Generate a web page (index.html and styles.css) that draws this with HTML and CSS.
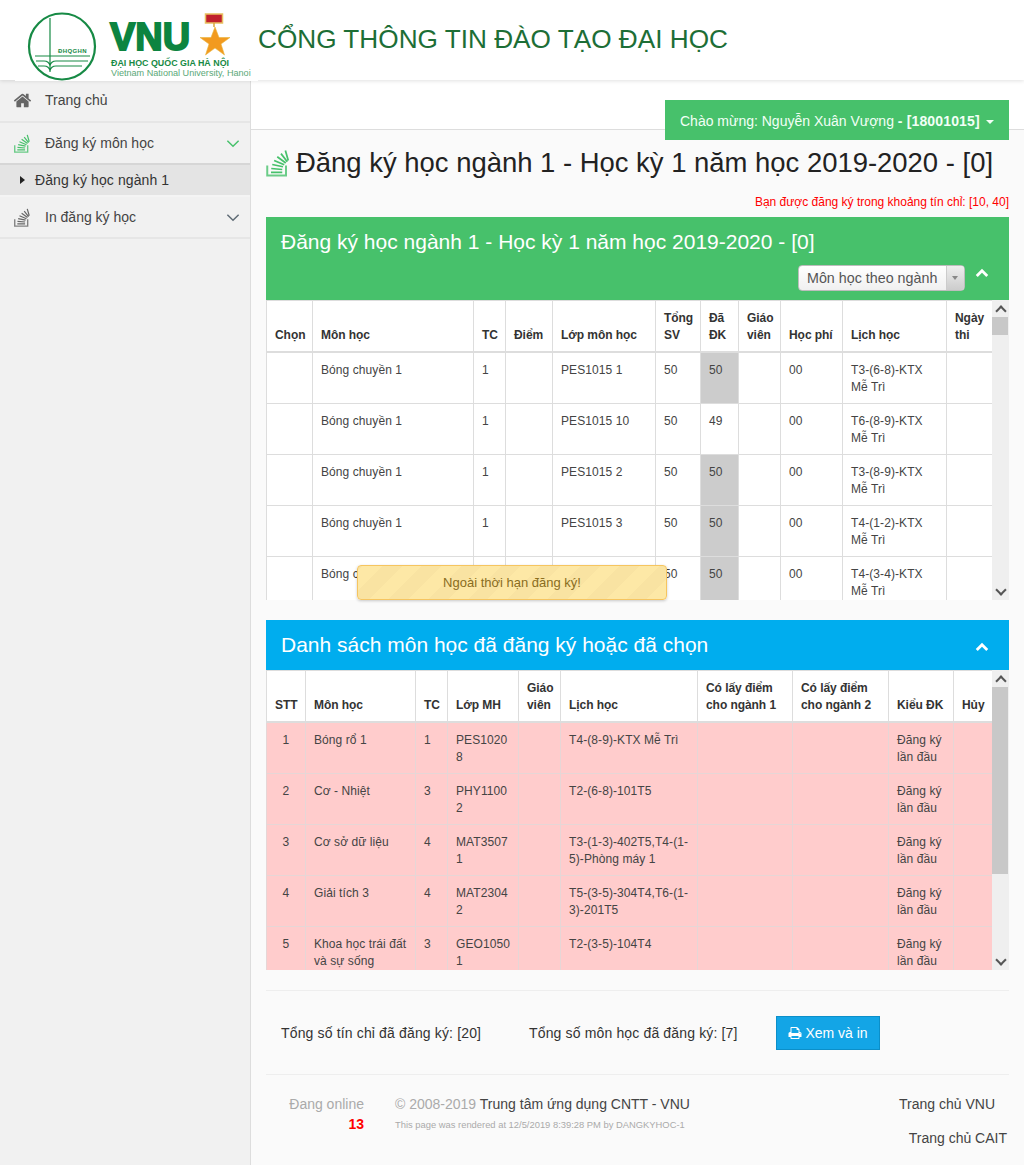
FILE: index.html
```html
<!DOCTYPE html>
<html lang="vi">
<head>
<meta charset="utf-8">
<title>Cổng thông tin đào tạo đại học</title>
<link rel="stylesheet" href="styles.css">
</head>
<body>
<svg class="defs" width="0" height="0">
  <symbol id="so" viewBox="0 0 20 22">
    <path d="M1 13v8h15v-8" fill="none" stroke="currentColor" stroke-width="1.600" opacity=".8"/>
    <path d="M4 18.500h9M4.200 15.400l8.800.8M5 12.200l8.600 1.800M6.500 9l8.100 3.400M9 6l6.800 5M12 3.500l5 6.500M15.500 1l2.300 8" fill="none" stroke="currentColor" stroke-width="1.400"/>
  </symbol>
</svg>
<header class="topbar">
  <div class="logo">
    <svg width="243" height="81" viewBox="0 0 243 81">
      <circle cx="47" cy="46.500" r="33" fill="#fff" stroke="#178a45" stroke-width="2.200"/>
      <path d="M35 18v54M20 56h55M21 61h8q5 0 6 5q1-5 6-5h32M23 66h6q5 0 6 5q1-5 6-5h26" fill="none" stroke="#178a45" stroke-width="1.200"/>
      <text x="43" y="53" class="lg-dh">ĐHQGHN</text>
      <text x="95" y="50" class="lg-vnu">VNU</text>
      <text x="96" y="66" class="lg-vi">ĐẠI HỌC QUỐC GIA HÀ NỘI</text>
      <text x="96" y="76" class="lg-en">Vietnam National University, Hanoi</text>
      <rect x="190.500" y="14" width="17" height="9" fill="#c0202c" stroke="#e8c060" stroke-width="1.500"/>
      <path d="M199 23v4" stroke="#d9a53a" stroke-width="1.500"/>
      <path d="M200 27l4 10.500h11l-9 6.500 3.500 11-9.500-7-9.500 7 3.500-11-9-6.500h11z" fill="#f29a1f" stroke="#e9b53a" stroke-width=".6"/>
    </svg>
  </div>
  <h1 class="site-title">CỔNG THÔNG TIN ĐÀO TẠO ĐẠI HỌC</h1>
</header>
<div class="shell">
  <nav class="sidebar">
    <a class="nav-item first">
      <svg class="nav-icon home" viewBox="0 0 1792 1792"><path fill="currentColor" d="M1472 992v480q0 26-19 45t-45 19h-384v-384h-256v384h-384q-26 0-45-19t-19-45v-480q0-1 .5-3t.5-3l575-474 575 474q1 2 1 6zm223-69l-62 74q-8 9-21 11h-3q-13 0-21-7l-692-577-692 577q-12 8-24 7-13-2-21-11l-62-74q-8-10-7-23.5t11-21.5l719-599q32-26 76-26t76 26l244 204v-195q0-14 9-23t23-9h192q14 0 23 9t9 23v408l219 182q10 8 11 21.500t-7 23.500z"/></svg>
      <span>Trang chủ</span>
    </a>
    <a class="nav-item active">
      <svg class="nav-icon so green"><use href="#so"/></svg>
      <span>Đăng ký môn học</span>
      <svg class="chev green" viewBox="0 0 12 8"><path d="M1 1.500l5 5 5-5" fill="none" stroke="currentColor" stroke-width="1.300"/></svg>
    </a>
    <a class="nav-sub"><i class="caret-r"></i>Đăng ký học ngành 1</a>
    <a class="nav-item second">
      <svg class="nav-icon so"><use href="#so"/></svg>
      <span>In đăng ký học</span>
      <svg class="chev" viewBox="0 0 12 8"><path d="M1 1.500l5 5 5-5" fill="none" stroke="currentColor" stroke-width="1.300"/></svg>
    </a>
  </nav>
  <main class="main">
    <div class="userbar">
      <div class="user-btn">Chào mừng: Nguyễn Xuân Vượng <b>- [18001015]</b><i class="caret-d"></i></div>
    </div>
    <div class="content">
      <h2 class="page-title"><svg class="title-icon green"><use href="#so"/></svg>Đăng ký học ngành 1 - Học kỳ 1 năm học 2019-2020 - [0]</h2>
      <p class="credit-note">Bạn được đăng ký trong khoảng tín chỉ: [10, 40]</p>

      <section class="panel">
        <div class="panel-head green-head tall">
          <div class="panel-title">Đăng ký học ngành 1 - Học kỳ 1 năm học 2019-2020 - [0]</div>
          <div class="panel-tools">
            <div class="select"><span>Môn học theo ngành</span><i class="select-arrow"></i></div>
            <svg class="collapse" viewBox="0 0 12 8"><path d="M1.500 6.500L6 2l4.500 4.500" fill="none" stroke="#fff" stroke-width="2.400"/></svg>
          </div>
        </div>
        <div class="scroller h300">
          <div class="table-clip">
            <table class="grid">
              <colgroup><col class="c46"><col class="c161"><col class="c32"><col class="c47"><col class="c103"><col class="c45"><col class="c38"><col class="c42"><col class="c62"><col class="c104"><col class="c46"></colgroup>
              <thead><tr><th>Chọn</th><th>Môn học</th><th>TC</th><th>Điểm</th><th>Lớp môn học</th><th>Tổng SV</th><th>Đã ĐK</th><th>Giáo viên</th><th>Học phí</th><th>Lịch học</th><th>Ngày thi</th></tr></thead>
              <tbody>
                <tr><td></td><td>Bóng chuyền 1</td><td>1</td><td></td><td>PES1015 1</td><td>50</td><td class="full">50</td><td></td><td>00</td><td>T3-(6-8)-KTX Mễ Trì</td><td></td></tr>
                <tr><td></td><td>Bóng chuyền 1</td><td>1</td><td></td><td>PES1015 10</td><td>50</td><td>49</td><td></td><td>00</td><td>T6-(8-9)-KTX Mễ Trì</td><td></td></tr>
                <tr><td></td><td>Bóng chuyền 1</td><td>1</td><td></td><td>PES1015 2</td><td>50</td><td class="full">50</td><td></td><td>00</td><td>T3-(8-9)-KTX Mễ Trì</td><td></td></tr>
                <tr><td></td><td>Bóng chuyền 1</td><td>1</td><td></td><td>PES1015 3</td><td>50</td><td class="full">50</td><td></td><td>00</td><td>T4-(1-2)-KTX Mễ Trì</td><td></td></tr>
                <tr><td></td><td>Bóng chuyền 1</td><td>1</td><td></td><td>PES1015 4</td><td>50</td><td class="full">50</td><td></td><td>00</td><td>T4-(3-4)-KTX Mễ Trì</td><td></td></tr>
              </tbody>
            </table>
          </div>
          <div class="fake-scroll"><i class="arrow up"></i><div class="track"><div class="thumb t1"></div></div><i class="arrow down"></i></div>
        </div>
      </section>

      <section class="panel second-panel">
        <div class="panel-head blue-head">
          <div class="panel-title">Danh sách môn học đã đăng ký hoặc đã chọn</div>
          <svg class="collapse" viewBox="0 0 12 8"><path d="M1.500 6.500L6 2l4.500 4.500" fill="none" stroke="#fff" stroke-width="2.400"/></svg>
        </div>
        <div class="scroller h300">
          <div class="table-clip">
            <table class="grid pink">
              <colgroup><col class="c39"><col class="c110"><col class="c32"><col class="c71"><col class="c42"><col class="c137"><col class="c95"><col class="c96"><col class="c65"><col class="c39"></colgroup>
              <thead><tr><th class="ctr">STT</th><th>Môn học</th><th>TC</th><th>Lớp MH</th><th>Giáo viên</th><th>Lịch học</th><th>Có lấy điểm cho ngành 1</th><th>Có lấy điểm cho ngành 2</th><th>Kiểu ĐK</th><th class="ctr">Hủy</th></tr></thead>
              <tbody>
                <tr><td class="ctr">1</td><td>Bóng rổ 1</td><td>1</td><td>PES1020 8</td><td></td><td>T4-(8-9)-KTX Mễ Trì</td><td></td><td></td><td>Đăng ký lần đầu</td><td></td></tr>
                <tr><td class="ctr">2</td><td>Cơ - Nhiệt</td><td>3</td><td>PHY1100 2</td><td></td><td>T2-(6-8)-101T5</td><td></td><td></td><td>Đăng ký lần đầu</td><td></td></tr>
                <tr><td class="ctr">3</td><td>Cơ sở dữ liệu</td><td>4</td><td>MAT3507 1</td><td></td><td>T3-(1-3)-402T5,T4-(1-5)-Phòng máy 1</td><td></td><td></td><td>Đăng ký lần đầu</td><td></td></tr>
                <tr><td class="ctr">4</td><td>Giải tích 3</td><td>4</td><td>MAT2304 2</td><td></td><td>T5-(3-5)-304T4,T6-(1-3)-201T5</td><td></td><td></td><td>Đăng ký lần đầu</td><td></td></tr>
                <tr><td class="ctr">5</td><td>Khoa học trái đất và sự sống</td><td>3</td><td>GEO1050 1</td><td></td><td>T2-(3-5)-104T4</td><td></td><td></td><td>Đăng ký lần đầu</td><td></td></tr>
              </tbody>
            </table>
          </div>
          <div class="fake-scroll"><i class="arrow up"></i><div class="track"><div class="thumb t2"></div></div><i class="arrow down"></i></div>
        </div>
      </section>

      <div class="summary">
        <span class="sum1">Tổng số tín chỉ đã đăng ký: [20]</span>
        <span class="sum2">Tổng số môn học đã đăng ký: [7]</span>
        <a class="print-btn"><svg class="print-icon" viewBox="0 0 1792 1792"><path fill="currentColor" d="M448 1536h896v-256h-896v256zm0-640h896v-384h-160q-40 0-68-28t-28-68v-160h-640v640zm1152 64q0-26-19-45t-45-19-45 19-19 45 19 45 45 19 45-19 19-45zm128 0v416q0 13-9.500 22.500t-22.500 9.500h-224v160q0 40-28 68t-68 28h-960q-40 0-68-28t-28-68v-160h-224q-13 0-22.500-9.500t-9.500-22.500v-416q0-79 56.500-135.500t135.500-56.500h64v-544q0-40 28-68t68-28h672q40 0 88 20t76 48l152 152q28 28 48 76t20 88v256h64q79 0 135.500 56.500t56.500 135.500z"/></svg> Xem và in</a>
      </div>

      <footer class="footer">
        <div class="online"><div>Đang online</div><b>13</b></div>
        <div class="copy">
          <div>© 2008-2019 <a>Trung tâm ứng dụng CNTT - VNU</a></div>
          <small>This page was rendered at 12/5/2019 8:39:28 PM by DANGKYHOC-1</small>
        </div>
        <div class="links"><a class="l1">Trang chủ VNU</a><a class="l2">Trang chủ CAIT</a></div>
      </footer>
    </div>
    <div class="toast">Ngoài thời hạn đăng ký!</div>
  </main>
</div>
</body>
</html>
```
FILE: styles.css
```css
* { box-sizing: border-box; }
html, body { margin: 0; padding: 0; height: 1165px; overflow: hidden; }
body { font-family: "Liberation Sans", Arial, sans-serif; font-size: 14px; color: #333; background: #fafafa; }
.defs { position: absolute; }
a { color: inherit; text-decoration: none; }
.green { color: #47c16b; }

.topbar { height: 80px; background: #fff; display: flex; box-shadow: 0 1px 4px rgba(0,0,0,.12); position: relative; z-index: 3; }
.logo { width: 243px; height: 81px; margin-left: 15px; background: #fff; }
.logo svg { display: block; }
.lg-dh { font: bold 6px "Liberation Sans", sans-serif; fill: #178a45; letter-spacing: .4px; }
.lg-vnu { font: 900 38px "Liberation Sans", sans-serif; fill: #0c8440; stroke: #0c8440; stroke-width: 1.800px; }
.lg-vi { font: bold 8.900px "Liberation Sans", sans-serif; fill: #178a45; }
.lg-en { font: 9.100px "Liberation Sans", sans-serif; fill: #5aa877; }
.site-title { margin: 0; font-size: 26.200px; font-weight: 400; line-height: 78px; color: #1d6e36; }

.shell { display: flex; height: 1085px; }
.sidebar { width: 251px; flex: none; background: #f1f1f1; border-right: 1px solid #ddd; padding-top: 1px; }
.nav-item { display: flex; align-items: center; height: 42px; border-bottom: 2px solid #e6e6e6; padding-left: 13px; color: #444; }
.nav-item span { margin-left: 13px; flex: 1; }
.nav-item.first { padding-bottom: 2px; }
.nav-item.active { border-bottom: 2px solid #d6d6d6; }
.nav-icon { width: 19px; height: 19px; color: #666; flex: none; }
.nav-icon.green { color: #47c16b; }
.chev { width: 14px; height: 9px; margin-right: 10px; color: #5f6b75; }
.chev.green { color: #47c16b; }
.nav-sub { display: flex; align-items: center; height: 32px; background: #e4e4e4; border-bottom: 2px solid #f4f4f4; padding-left: 20px; color: #333; letter-spacing: .1px; }
.caret-r { width: 0; height: 0; border-left: 5px solid #222; border-top: 4px solid transparent; border-bottom: 4px solid transparent; margin-right: 10px; }

.main { flex: 1; position: relative; min-width: 0; }
.userbar { height: 50px; background: #fff; border-bottom: 1px solid #ddd; display: flex; justify-content: flex-end; padding-right: 15px; }
.user-btn { height: 40px; margin-top: 20px; width: 344px; background: #47c16b; color: #f2fff6; line-height: 42px; padding-left: 15px; white-space: nowrap; position: relative; z-index: 1; }
.user-btn b { letter-spacing: .15px; }
.caret-d { display: inline-block; margin-left: 6px; vertical-align: middle; border-top: 4px solid #f2fff6; border-left: 4px solid transparent; border-right: 4px solid transparent; }

.content { padding: 0 15px; }
.page-title { display: flex; align-items: center; margin: 0; height: 65px; font-size: 27.450px; font-weight: 400; color: #222; white-space: nowrap; }
.title-icon { width: 25px; height: 28px; margin-right: 5px; flex: none; }
.credit-note { margin: 0; height: 22px; font-size: 12px; line-height: 14px; color: #f00; text-align: right; }

.panel { background: #fff; }
.second-panel { margin-top: 20px; }
.panel-head { display: flex; align-items: center; justify-content: space-between; color: #fff; padding: 0 20px 0 15px; }
.panel-title { font-size: 21px; white-space: nowrap; }
.green-head { background: #47c16b; }
.blue-head { background: #00adee; height: 50px; }
.blue-head .collapse { margin-top: 4px; }
.tall { display: block; height: 83px; padding-top: 13px; }
.panel-tools { display: flex; justify-content: flex-end; align-items: flex-start; margin-top: 11px; }
.collapse { width: 14px; height: 10px; flex: none; }
.panel-tools .collapse { margin: 3px 0 0 10px; }
.select { display: flex; align-items: center; width: 167px; height: 26px; border: 1px solid #bdbdbd; border-radius: 4px; background: linear-gradient(#fff, #f0f0f0); color: #555; padding-left: 8px; line-height: 24px; white-space: nowrap; font-size: 14.300px; position: relative; }
.select span { flex: 1; }
.select-arrow { position: relative; width: 18px; height: 24px; background: linear-gradient(#eee, #ccc); border-left: 1px solid #ccc; border-radius: 0 3px 3px 0; }
.select-arrow::after { content: ""; position: absolute; left: 5px; top: 10px; border-top: 4px solid #888; border-left: 3px solid transparent; border-right: 3px solid transparent; }

.scroller { display: flex; background: #fff; overflow: hidden; }
.h300 { height: 300px; }
.table-clip { flex: 1; overflow: hidden; min-width: 0; }
.grid { width: 726px; table-layout: fixed; border-collapse: collapse; font-size: 12px; line-height: 17px; color: #444; background: #fff; }
.grid th, .grid td { border: 1px solid #ddd; padding: 8px; text-align: left; vertical-align: top; }
.grid th { vertical-align: bottom; border-bottom: 2px solid #ddd; color: #333; font-weight: 700; height: 51px; padding-bottom: 7px; letter-spacing: -.06px; }
.grid td { height: 51px; padding-top: 9px; padding-bottom: 7px; letter-spacing: .08px; }
.grid .ctr { text-align: center; }
.grid td.full { background: #ccc; }
.pink tbody td { background: #ffcccc; border-color: #e6d6d6; }
.c32 { width: 32px; } .c38 { width: 38px; } .c39 { width: 39px; } .c42 { width: 42px; } .c45 { width: 45px; } .c46 { width: 46px; } .c47 { width: 47px; } .c62 { width: 62px; } .c65 { width: 65px; } .c71 { width: 71px; } .c95 { width: 95px; } .c96 { width: 96px; } .c103 { width: 103px; } .c104 { width: 104px; } .c110 { width: 110px; } .c137 { width: 137px; } .c161 { width: 161px; }

.fake-scroll { width: 17px; flex: none; background: #efefef; display: flex; flex-direction: column; }
.track { flex: 1; }
.thumb { background: #c8c8c8; margin: 0 1px 0 0; }
.t1 { height: 18px; }
.t2 { height: 187px; }
.arrow { display: block; height: 17px; position: relative; }
.arrow::after { content: ""; position: absolute; left: 5px; width: 6px; height: 6px; border-left: 2px solid #555; border-top: 2px solid #555; }
.arrow.up::after { top: 7px; transform: rotate(45deg); }
.arrow.down::after { top: 3px; transform: rotate(225deg); }

.summary { display: flex; align-items: center; margin-top: 20px; height: 85px; padding: 0 15px; border-top: 1px solid #eee; border-bottom: 1px solid #eee; color: #333; letter-spacing: .15px; }
.sum1 { width: 248px; }
.sum2 { width: 247px; }
.print-btn { display: flex; align-items: center; justify-content: center; width: 104px; height: 34px; background: #13a5e6; border: 1px solid #0b8fc9; color: #fff; letter-spacing: 0; }
.print-icon { width: 14px; height: 14px; margin-right: 3px; }

.footer { display: flex; height: 88px; padding-top: 19px; }
.online { width: 98px; text-align: right; color: #aaa; line-height: 20px; }
.online b { display: block; color: #f00; }
.copy { margin-left: 31px; flex: 1; color: #aaa; line-height: 20px; }
.copy a { color: #444; }
.copy small { display: block; font-size: 9.400px; line-height: 21px; }
.links { display: flex; flex-direction: column; align-items: flex-end; color: #444; line-height: 20px; }
.links a.l1 { margin-right: 14px; }
.links a.l2 { margin: 14px 2px 0 0; }

.toast { position: absolute; left: 106px; top: 485px; width: 310px; height: 35px; border: 1px solid #f6c560; border-radius: 4px; color: #8a6d1e; font-size: 13px; line-height: 34px; text-align: center; box-shadow: 0 1px 3px rgba(0,0,0,.2); background: repeating-linear-gradient(-45deg, #fde8a6 0 14px, #f9e3a2 14px 28px); z-index: 2; }
```
